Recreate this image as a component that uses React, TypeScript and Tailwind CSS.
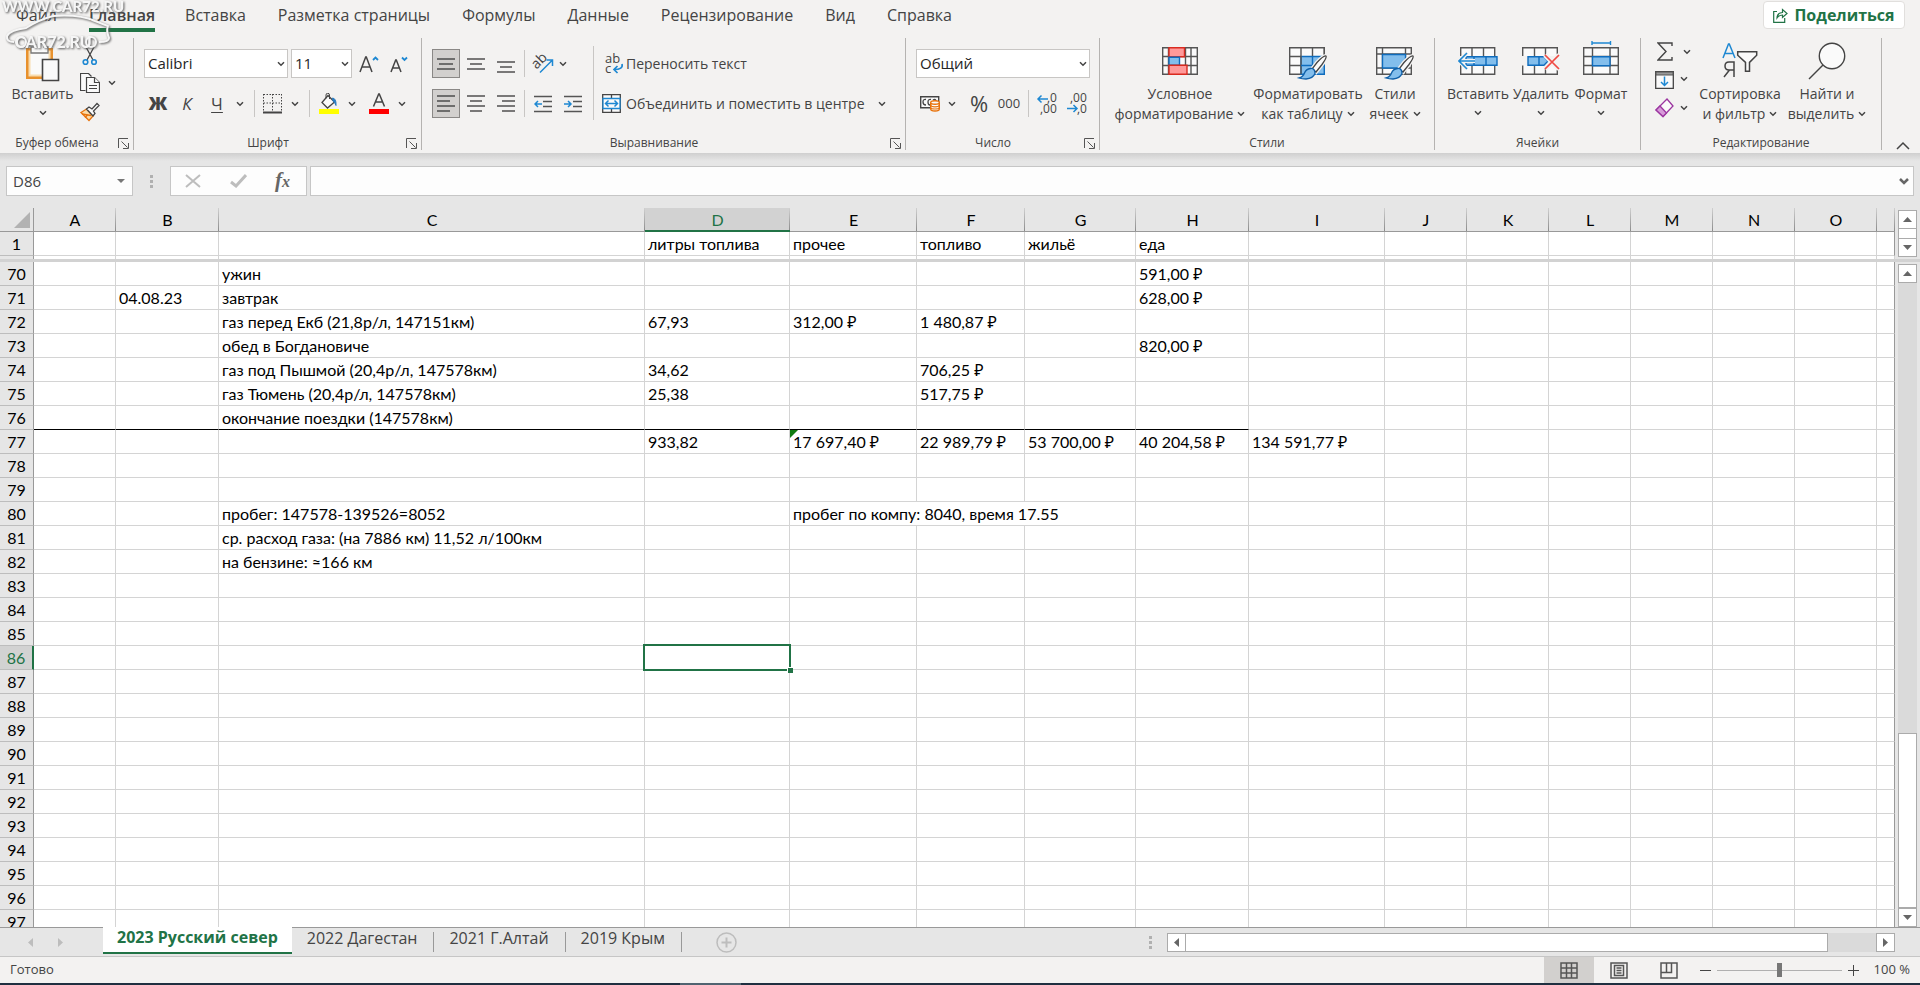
import type { ReactNode } from 'react';

const TABS = ['Файл', 'Главная', 'Вставка', 'Разметка страницы', 'Формулы', 'Данные', 'Рецензирование', 'Вид', 'Справка'];

const SHEETS = ['2023 Русский север', '2022 Дагестан', '2021 Г.Алтай', '2019 Крым'];

const COLUMNS = [
  { id: 'A', width: 'w-[82px]' },
  { id: 'B', width: 'w-[103px]' },
  { id: 'C', width: 'w-[426px]' },
  { id: 'D', width: 'w-[145px]' },
  { id: 'E', width: 'w-[127px]' },
  { id: 'F', width: 'w-[108px]' },
  { id: 'G', width: 'w-[111px]' },
  { id: 'H', width: 'w-[113px]' },
  { id: 'I', width: 'w-[136px]' },
  { id: 'J', width: 'w-[82px]' },
  { id: 'K', width: 'w-[82px]' },
  { id: 'L', width: 'w-[82px]' },
  { id: 'M', width: 'w-[82px]' },
  { id: 'N', width: 'w-[82px]' },
  { id: 'O', width: 'w-[82px]' },
  { id: '', width: '' },
];

const CELLS: Record<string, string> = {
  D1: 'литры топлива',
  E1: 'прочее',
  F1: 'топливо',
  G1: 'жильё',
  H1: 'еда',
  C70: 'ужин',
  H70: '591,00 ₽',
  B71: '04.08.23',
  C71: 'завтрак',
  H71: '628,00 ₽',
  C72: 'газ перед Екб (21,8р/л, 147151км)',
  D72: '67,93',
  E72: '312,00 ₽',
  F72: '1 480,87 ₽',
  C73: 'обед в Богдановиче',
  H73: '820,00 ₽',
  C74: 'газ под Пышмой (20,4р/л, 147578км)',
  D74: '34,62',
  F74: '706,25 ₽',
  C75: 'газ Тюмень (20,4р/л, 147578км)',
  D75: '25,38',
  F75: '517,75 ₽',
  C76: 'окончание поездки (147578км)',
  D77: '933,82',
  E77: '17 697,40 ₽',
  F77: '22 989,79 ₽',
  G77: '53 700,00 ₽',
  H77: '40 204,58 ₽',
  I77: '134 591,77 ₽',
  C80: 'пробег: 147578-139526=8052',
  E80: 'пробег по компу: 8040, время 17.55',
  C81: 'ср. расход газа: (на 7886 км) 11,52 л/100км',
  C82: 'на бензине: ≈166 км',
};

const ROWS = Array.from({ length: 28 }, (_, i) => 70 + i);

function Chevron({ className = '' }: { className?: string }) {
  return (
    <svg viewBox="0 0 8 6" className={`h-[6px] w-[8px] shrink-0 ${className}`} fill="none" stroke="#444" strokeWidth="1.5">
      <path d="M1 1.2 4 4.2 7 1.2" />
    </svg>
  );
}

function Launcher({ label }: { label: string }) {
  return (
    <button aria-label={label} className="ml-1 mr-1">
      <svg viewBox="0 0 11 11" className="h-[11px] w-[11px]" fill="none" stroke="#555">
        <path d="M.5 10V.5H10M3.5 3.5l6 6M10.5 5v5.5H5" />
      </svg>
    </button>
  );
}

function Group({ title, width, launcher, children }: { title: string; width: string; launcher?: boolean; children: ReactNode }) {
  return (
    <section className={`flex shrink-0 flex-col border-r border-[#b5b3b1] ${width}`}>
      <div className="flex h-[98px] pt-1">{children}</div>
      <div className="flex h-3.5 items-center">
        <span className="flex-1 whitespace-nowrap text-center text-[12px] leading-4">{title}</span>
        {launcher && <Launcher label={`Параметры: ${title}`} />}
      </div>
    </section>
  );
}

function BigButton({ width, icon, lines, arrowBelow }: { width: string; icon: ReactNode; lines: string[]; arrowBelow?: boolean }) {
  return (
    <button className={`flex shrink-0 flex-col items-center whitespace-nowrap text-[14px] leading-5 ${width}`}>
      <span className="flex h-[42px] items-start justify-center">{icon}</span>
      <span>{lines[0]}</span>
      {arrowBelow ? (
        <Chevron className="mt-1.5" />
      ) : (
        <span className="flex items-center gap-1">
          {lines[1]}
          <Chevron />
        </span>
      )}
    </button>
  );
}

function IconButton({ label, width = 'w-[28px]', active, children }: { label: string; width?: string; active?: boolean; children: ReactNode }) {
  return (
    <button
      aria-label={label}
      className={`flex h-[29px] shrink-0 items-center justify-center ${width} ${active ? 'border border-[#8a8886] bg-[#d2d0ce]' : ''}`}
    >
      {children}
    </button>
  );
}

function Lines({ rows, y = 0 }: { rows: [number, number][]; y?: number }) {
  return (
    <svg viewBox="0 0 18 18" className="h-[18px] w-[18px]" stroke="#444" strokeWidth="1.4">
      {rows.map(([a, b], i) => (
        <path key={i} d={`M${a} ${y + i * 5}H${b}`} />
      ))}
    </svg>
  );
}

function Indent({ right }: { right?: boolean }) {
  return (
    <svg viewBox="0 0 18 18" className="h-[18px] w-[18px]" fill="none" stroke="#555" strokeWidth="1.5">
      <path d="M0 1.5h18M9 6.5h9M9 11.5h9M0 16.5h18" />
      <path d={right ? 'M0 9h7M4 6l3 3-3 3' : 'M8 9H1M4 6 1 9l3 3'} stroke="#1e88d2" />
    </svg>
  );
}

function PasteIcon() {
  return (
    <svg viewBox="0 0 36 38" className="mt-0.5 h-[38px] w-[36px]" fill="none">
      <path d="M2.500 5.500h24v28h-24z" fill="#fafafa" stroke="#e8912d" strokeWidth="3" />
      <path d="M4.500 7.500h20v24h-20z" stroke="#f8dcae" strokeWidth="2" />
      <path d="M6 3h4a4.500 4.500 0 0 1 9 0h4v6H6z" fill="#fafafa" stroke="#777" strokeWidth="1.300" />
      <path d="M17.500 15.500h16v21h-16z" fill="#fafafa" stroke="#444" strokeWidth="1.600" />
    </svg>
  );
}

function ScissorsIcon() {
  return (
    <svg viewBox="0 0 16 20" className="h-[20px] w-[16px]" fill="none" strokeWidth="1.300">
      <path d="M4 1l7 13M12 1 5 14" stroke="#444" />
      <circle cx="3.500" cy="16" r="2.300" stroke="#1e88d2" strokeWidth="1.600" />
      <circle cx="12" cy="16" r="2.300" stroke="#1e88d2" strokeWidth="1.600" />
    </svg>
  );
}

function CopyIcon() {
  return (
    <svg viewBox="0 0 20 20" className="h-[20px] w-[20px]" fill="#fafafa" stroke="#444" strokeWidth="1.200">
      <path d="M5.500 17.500h-5V.500h8l3 3" />
      <path d="M6.500 4.500h8l5 5v10h-13z" />
      <path d="M14.500 4.500v5h5M9 12.500h8M9 15.500h8" />
    </svg>
  );
}

function BrushIcon() {
  return (
    <svg viewBox="0 0 20 20" className="h-[20px] w-[20px]" strokeWidth="1.300">
      <path d="M1 10.500 6.500 7l6.500 7-4 4.500z" fill="#fbdca9" stroke="#e8730c" />
      <path d="m2 12 9 1.500M5 15.500l3-3" stroke="#e8730c" />
      <path d="m6.500 7 2.500-2 3 2 5-5.500 2 2-5.500 5.500 1.500 2.500-2 2.500z" fill="#fafafa" stroke="#444" />
    </svg>
  );
}

function BordersIcon() {
  return (
    <svg viewBox="0 0 19 20" className="h-[20px] w-[19px]" fill="none" stroke="#444">
      <path d="M.500.500h18M.500 9h18M.500 0v17M9.500 0v17M18.500 0v17" strokeDasharray="1.500 1.500" />
      <path d="M0 18.500h19" strokeWidth="2" />
    </svg>
  );
}

function FillIcon() {
  return (
    <svg viewBox="0 0 20 21" className="h-[21px] w-[20px]" fill="none">
      <path d="m9 2.500 6.500 6.500-7 6L3 9.500z" fill="#fafafa" stroke="#444" strokeWidth="1.300" />
      <path d="M7 5.500V2a1.500 1.500 0 0 1 3.500 0v4" stroke="#444" />
      <path d="M13.500 5q4 .500 3.500 7.500-1-3-3-4.500z" fill="#2b7cc0" stroke="#2b7cc0" />
      <path d="M0 16h20v5H0z" fill="#ff0" />
    </svg>
  );
}

function FontColorIcon() {
  return (
    <svg viewBox="0 0 20 21" className="h-[21px] w-[20px]" fill="none">
      <path d="M4.500 13.500 9.700 1h.600l5.200 12.500M6.500 9h7" stroke="#444" strokeWidth="1.500" />
      <path d="M0 16h20v5H0z" fill="#f00" />
    </svg>
  );
}

function FontSizeIcon({ grow }: { grow?: boolean }) {
  return (
    <svg viewBox="0 0 20 18" className="h-[18px] w-[20px]" fill="none" strokeWidth="1.500">
      <path d={grow ? 'M1 17 6.700 2h.600L13 17M3 12h8' : 'M1 17 5.700 5h.600L11 17M3 13h6'} stroke="#444" />
      <path d={grow ? 'm14 5 2.500-2.500L19 5' : 'm12 2.500 2.500 2.500L17 2.500'} stroke="#1e88d2" strokeWidth="1.800" />
    </svg>
  );
}

function OrientationIcon() {
  return (
    <svg viewBox="0 0 22 21" className="h-[21px] w-[22px] overflow-visible" fill="none">
      <text x="1" y="14" fontSize="14" fill="#444" transform="rotate(-45 6 11)" className="font-['Open_Sans',sans-serif]">ab</text>
      <path d="M8 19.500 20 7.500M14.500 7H20.500V13" stroke="#1e88d2" strokeWidth="1.500" />
    </svg>
  );
}

function WrapIcon() {
  return (
    <svg viewBox="0 0 19 20" className="h-[20px] w-[19px] overflow-visible" fill="none">
      <text x="0" y="9" fontSize="13" fill="#444" className="font-['Open_Sans',sans-serif]">ab</text>
      <text x="0" y="19" fontSize="13" fill="#444" className="font-['Open_Sans',sans-serif]">c</text>
      <path d="M17 10q1.500 5.500-8 5.500M12.500 12 9 15.500l3.500 3.500" stroke="#1e88d2" strokeWidth="1.700" />
    </svg>
  );
}

function MergeIcon() {
  return (
    <svg viewBox="0 0 19 19" className="h-[19px] w-[19px]" fill="none" strokeWidth="1.300">
      <path d="M.700.700h17.600v17.600H.700zM9.500 1v4M9.500 14v4" fill="#fafafa" stroke="#444" />
      <path d="M1 4.500h17v10H1z" fill="#fafafa" stroke="#1e88d2" />
      <path d="M3.500 9.500h12M6.500 6.500l-3 3 3 3M12.500 6.500l3 3-3 3" stroke="#1e88d2" strokeWidth="1.500" />
    </svg>
  );
}

function CurrencyIcon() {
  return (
    <svg viewBox="0 0 20 17" className="h-[17px] w-[20px]" fill="none">
      <path d="M.700 1.700h18v11H.700z" fill="#fafafa" stroke="#444" strokeWidth="1.400" />
      <path d="M6 4.500Q3 4 3 7t3 3M11 4.500Q8 4 8 7t2 3M13 5q3-2 3 2" stroke="#444" strokeWidth="1.300" />
      <path d="M10.700 7.500v6.500q0 2 4.300 2t4.300-2V7.500" fill="#fafafa" stroke="#e8730c" strokeWidth="1.400" />
      <ellipse cx="15" cy="7.500" rx="4.300" ry="1.800" fill="#fafafa" stroke="#e8730c" strokeWidth="1.400" />
      <path d="M10.700 10q0 1.800 4.300 1.800t4.300-1.800M10.700 12.500q0 1.500 4.300 1.500t4.300-1.500" stroke="#e8730c" strokeWidth="1.200" />
    </svg>
  );
}

function DecimalIcon({ less }: { less?: boolean }) {
  return (
    <svg viewBox="0 0 20 21" className="h-[21px] w-[20px] overflow-visible" fill="none">
      <text x={less ? 3 : 10} y="9" fontSize="12" fill="#444" className="font-['Open_Sans',sans-serif]">{less ? ',00' : ',0'}</text>
      <text x={less ? 10 : 3} y="20" fontSize="12" fill="#444" className="font-['Open_Sans',sans-serif]">{less ? ',0' : ',00'}</text>
      <path d={less ? 'M0 15.500h10M6.500 12l3.500 3.500L6.500 19' : 'M11 6H1M4.500 2.500 1 6l3.500 3.500'} stroke="#1e88d2" strokeWidth="1.500" />
    </svg>
  );
}

function ConditionalIcon() {
  return (
    <svg viewBox="0 0 36 36" className="h-[36px] w-[36px]" strokeWidth="1.400">
      <path d="M.700 5.700h34.600v26.600H.700z" fill="#fafafa" stroke="#555" />
      <path d="M6.500 6v26M23.500 6v26M29 6v26M1 14.500h34M1 23.500h34" stroke="#555" />
      <path d="M7 5.700h15.500v9H7z" fill="#ff9999" stroke="#d92b20" />
      <path d="M7 15.300h10.500v8H7z" fill="#83beec" stroke="#0f6cbd" />
      <path d="M7 23.300h18v9H7z" fill="#ff9999" stroke="#d92b20" />
    </svg>
  );
}

function PaintBrush() {
  return (
    <g strokeWidth="1.300">
      <path d="M37 14q-2-1-9 6.500l-5 6.500 4 3 6-7.500q5-7 4-8.500z" fill="#fafafa" stroke="#f3f2f1" strokeWidth="4" />
      <path d="M37 14q-2-1-9 6.500l-5 6.500 4 3 6-7.500q5-7 4-8.500z" fill="#fafafa" stroke="#444" />
      <path d="M10 36q4-1 5.500-5t6-4.500 4.500 5q-2 5-9 5.500-4 0-7-1z" fill="#83beec" stroke="#0f5fa8" />
    </g>
  );
}

function FormatTableIcon() {
  return (
    <svg viewBox="0 0 38 38" className="h-[38px] w-[38px]" strokeWidth="1.400">
      <path d="M.700 5.700h34.600v26.600H.700z" fill="#fafafa" stroke="#555" />
      <path d="M12 14.500h23.300v17.800H12z" fill="#83beec" stroke="#0f6cbd" />
      <path d="M12 6v26M23.500 6v8M1 14.500h11M1 23.500h11M35.300 6v8" stroke="#555" />
      <path d="M23.500 14.500v18M12 23.500h23" stroke="#0f6cbd" />
      <PaintBrush />
    </svg>
  );
}

function CellStylesIcon() {
  return (
    <svg viewBox="0 0 38 38" className="h-[38px] w-[38px]" strokeWidth="1.400">
      <path d="M.700 5.700h34.600v26.600H.700z" fill="#fafafa" stroke="#555" />
      <path d="M6.500 6v26M29.500 6v26M1 12h34M1 26h34" stroke="#555" />
      <path d="M6.500 12.500h23V26h-23z" fill="#83beec" stroke="#0f6cbd" />
      <PaintBrush />
    </svg>
  );
}

function InsertCellsIcon() {
  return (
    <svg viewBox="0 0 40 36" className="h-[36px] w-[40px]" strokeWidth="1.400">
      <path d="M2.700 5.700h34v26.600h-34z" fill="#fafafa" stroke="#555" />
      <path d="M14 6v26M25.500 6v26" stroke="#555" />
      <path d="M0 14h4v9H0z" fill="#f3f2f1" />
      <path d="M8 14.700h31v8.600H8zM16 14.700v8.600M28 14.700v8.600" fill="#83beec" stroke="#0f6cbd" />
      <path d="M17 19H1M9 11 1 19l8 8" fill="none" stroke="#f3f2f1" strokeWidth="4" />
      <path d="M17 19H1M9 11 1 19l8 8" fill="none" stroke="#1e88d2" strokeWidth="1.600" />
    </svg>
  );
}

function DeleteCellsIcon() {
  return (
    <svg viewBox="0 0 38 36" className="h-[36px] w-[38px]" strokeWidth="1.400">
      <path d="M.700 5.700h34.600v26.600H.700z" fill="#fafafa" stroke="#555" />
      <path d="M12.500 6v26M23.500 6v26" stroke="#555" />
      <path d="M0 14h38v9.500H0z" fill="#f3f2f1" />
      <path d="M6 14.700h16l4 4.300-4 4.300H6zM17 14.700v8.600" fill="#83beec" stroke="#0f6cbd" />
      <path d="m23 13 14 14M37 13 23 27" stroke="#f3f2f1" strokeWidth="5" />
      <path d="m23 13 14 14M37 13 23 27" stroke="#f04a43" strokeWidth="1.700" />
    </svg>
  );
}

function FormatCellsIcon() {
  return (
    <svg viewBox="0 0 36 36" className="h-[36px] w-[36px] overflow-visible" strokeWidth="1.400">
      <path d="M.700 5.700h34.600v26.600H.700z" fill="#fafafa" stroke="#555" />
      <path d="M9.500 6v26M27 6v26M1 14.500h34M1 23.500h34" stroke="#555" />
      <path d="M9.500 14.700h17.500v9H9.500z" fill="#83beec" stroke="#0f6cbd" />
      <path d="M9 1h18.500M9-1v4M27.500-1v4" stroke="#1e88d2" />
    </svg>
  );
}

function SumIcon() {
  return (
    <svg viewBox="0 0 16 19" className="h-[19px] w-[16px]" fill="none" stroke="#444" strokeWidth="1.400">
      <path d="M15 4V1H1l8 8.500L1 18h14v-3" />
    </svg>
  );
}

function FillDownIcon() {
  return (
    <svg viewBox="0 0 19 19" className="h-[19px] w-[19px]" strokeWidth="1.300">
      <path d="M.700 1.700h17.600v16.600H.700z" fill="#fafafa" stroke="#444" />
      <path d="M1 2h17v3H1z" fill="#999" stroke="#555" strokeWidth="1" />
      <path d="M9.500 6.500v9M6 12l3.500 3.500L13 12" fill="none" stroke="#1e88d2" strokeWidth="1.500" />
    </svg>
  );
}

function EraserIcon() {
  return (
    <svg viewBox="0 0 19 20" className="h-[20px] w-[19px]" stroke="#9b35a0" strokeWidth="1.300">
      <path d="m12 1 6 7-10 10.500L1 12z" fill="#fafafa" />
      <path d="m5 8 6.500 7L8 18.500 1 12z" fill="#d79ad9" />
    </svg>
  );
}

function SortFilterIcon() {
  return (
    <svg viewBox="0 0 36 36" className="h-[36px] w-[36px]" fill="none" strokeWidth="1.500">
      <path d="M1 16 6.500 2h.800L13 16M3 11.500h8" stroke="#1e88d2" />
      <path d="M12 35V20H7q-4 0-4 4t4 4h5M7.500 28 2 35" stroke="#444" />
      <path d="M15.700 9.700h19v3.500l-7.200 7.200v8.800h-4v-8.800l-7.800-7.200z" fill="#fafafa" stroke="#444" />
    </svg>
  );
}

function FindIcon() {
  return (
    <svg viewBox="0 0 38 38" className="h-[38px] w-[38px]" stroke="#444" strokeWidth="1.400">
      <circle cx="24" cy="14" r="12.700" fill="#fafafa" />
      <path d="M15 23 1 37" />
    </svg>
  );
}

function SelectBox({ label, value, width }: { label: string; value: string; width: string }) {
  return (
    <div className={`relative shrink-0 ${width}`}>
      <select
        aria-label={label}
        defaultValue={value}
        className="h-[29px] w-full appearance-none rounded-none border border-[#c8c6c4] bg-white px-[3px] text-[15px] text-[#262626] outline-none"
      >
        <option>{value}</option>
      </select>
      <Chevron className="pointer-events-none absolute right-[3px] top-[12px]" />
    </div>
  );
}

function Divider({ height = 'h-[27px]' }: { height?: string }) {
  return <span className={`w-px shrink-0 bg-[#c8c6c4] ${height}`} />;
}

function Watermark() {
  return (
    <svg viewBox="0 0 130 54" aria-label="car72.ru" className="pointer-events-none absolute left-0 top-0 z-10 h-[54px] w-[130px] overflow-visible drop-shadow-[1px_1px_1px_#555]">
      <g className="font-['Lato',sans-serif] font-black" fill="#f6f6f6">
        <text x="2" y="12" fontSize="15">WWW.CAR72.RU</text>
        <text x="15" y="48" fontSize="16">CAR72.RU</text>
      </g>
      <path
        d="M14 42q-8 0-7-6 3-6 19-8 12-8 27-12 26-2 42 5l13 5q-2 5 1 12 0 4-10 4"
        fill="none"
        stroke="#f6f6f6"
        strokeWidth="2"
      />
      <circle cx="21" cy="42" r="5" fill="none" stroke="#f6f6f6" strokeWidth="2" />
      <circle cx="91" cy="42" r="5" fill="none" stroke="#f6f6f6" strokeWidth="2" />
    </svg>
  );
}

function Ribbon() {
  return (
    <div className="flex h-[115px] pb-[3px] text-[#444]">
      <Group title="Буфер обмена" width="w-[134px]" launcher>
        <BigButton width="ml-2.5 w-[65px]" icon={<PasteIcon />} lines={['Вставить']} arrowBelow />
        <div className="ml-[5px] flex flex-col">
          <button aria-label="Вырезать" className="flex h-[27px] items-center pl-0.5"><ScissorsIcon /></button>
          <button aria-label="Копировать" className="flex h-[28px] items-center gap-2"><CopyIcon /><Chevron /></button>
          <button aria-label="Формат по образцу" className="flex h-[29px] items-center"><BrushIcon /></button>
        </div>
      </Group>

      <Group title="Шрифт" width="w-[288px]" launcher>
        <div className="flex flex-col gap-[11px] pl-2.5 pt-[7px]">
          <div className="flex items-center gap-[3px]">
            <SelectBox label="Шрифт" value="Calibri" width="w-[144px]" />
            <SelectBox label="Размер шрифта" value="11" width="w-[61px]" />
            <div className="flex">
              <IconButton label="Увеличить размер"><FontSizeIcon grow /></IconButton>
              <IconButton label="Уменьшить размер" width="w-[34px]"><FontSizeIcon /></IconButton>
            </div>
          </div>
          <div className="flex items-center">
            <IconButton label="Полужирный"><span className="text-[18px] font-extrabold">Ж</span></IconButton>
            <IconButton label="Курсив" width="w-[30px]"><span className="text-[17px] italic">К</span></IconButton>
            <IconButton label="Подчёркнутый" width="w-[30px]"><span className="text-[17px] underline underline-offset-2">Ч</span></IconButton>
            <Chevron className="ml-1" />
            <Divider height="ml-2.5 h-[27px]" />
            <IconButton label="Границы" width="ml-0.5 w-[30px]"><BordersIcon /></IconButton>
            <Chevron className="ml-1" />
            <Divider height="ml-2.5 h-[27px]" />
            <IconButton label="Цвет заливки" width="ml-1 w-[30px]"><FillIcon /></IconButton>
            <Chevron className="ml-1" />
            <IconButton label="Цвет шрифта" width="ml-2 w-[30px]"><FontColorIcon /></IconButton>
            <Chevron className="ml-1" />
          </div>
        </div>
      </Group>

      <Group title="Выравнивание" width="w-[484px]" launcher>
        <div className="flex flex-col gap-[11px] pl-2.5 pt-[7px]">
          <div className="flex items-center gap-0.5">
            <IconButton label="По верхнему краю" active><Lines rows={[[0, 18], [2, 16], [0, 18]]} y={4} /></IconButton>
            <IconButton label="По середине"><Lines rows={[[0, 18], [3, 15], [0, 18]]} y={4} /></IconButton>
            <IconButton label="По нижнему краю"><Lines rows={[[0, 18], [3, 15], [0, 18]]} y={7} /></IconButton>
            <Divider height="mx-0.5 h-[27px]" />
            <IconButton label="Ориентация"><OrientationIcon /></IconButton>
            <Chevron />
          </div>
          <div className="flex items-center gap-0.5">
            <IconButton label="По левому краю" active><Lines rows={[[0, 18], [0, 13], [0, 18], [0, 13]]} y={1} /></IconButton>
            <IconButton label="По центру"><Lines rows={[[0, 18], [3, 15], [0, 18], [3, 15]]} y={1} /></IconButton>
            <IconButton label="По правому краю"><Lines rows={[[0, 18], [5, 18], [0, 18], [5, 18]]} y={1} /></IconButton>
            <Divider height="mx-0.5 h-[27px]" />
            <IconButton label="Уменьшить отступ"><Indent /></IconButton>
            <IconButton label="Увеличить отступ"><Indent right /></IconButton>
          </div>
        </div>
        <Divider height="ml-1.5 mt-1 h-[74px]" />
        <div className="flex flex-col gap-[11px] pl-2 pt-[7px] text-[14px]">
          <button className="flex h-[29px] items-center gap-0.5 whitespace-nowrap pl-[3px]"><WrapIcon />Переносить текст</button>
          <button className="flex h-[29px] items-center gap-[5px] whitespace-nowrap"><MergeIcon />Объединить и поместить в центре<Chevron className="ml-2" /></button>
        </div>
      </Group>

      <Group title="Число" width="w-[194px]" launcher>
        <div className="flex flex-col gap-[11px] pl-2.5 pt-[7px]">
          <SelectBox label="Числовой формат" value="Общий" width="w-[174px]" />
          <div className="flex items-center">
            <IconButton label="Финансовый формат"><CurrencyIcon /></IconButton>
            <Chevron className="ml-1" />
            <IconButton label="Процентный формат" width="ml-2 w-[30px]"><span className="text-[22px]">%</span></IconButton>
            <IconButton label="Формат с разделителями" width="w-[30px]"><span className="text-[13px]">000</span></IconButton>
            <Divider height="mx-1 h-[27px]" />
            <IconButton label="Увеличить разрядность" width="w-[28px]"><DecimalIcon /></IconButton>
            <IconButton label="Уменьшить разрядность" width="w-[32px]"><DecimalIcon less /></IconButton>
          </div>
        </div>
      </Group>

      <Group title="Стили" width="w-[335px]">
        <BigButton width="ml-2.5 w-[140px]" icon={<ConditionalIcon />} lines={['Условное', 'форматирование']} />
        <BigButton width="w-[116px]" icon={<FormatTableIcon />} lines={['Форматировать', 'как таблицу']} />
        <BigButton width="w-[58px]" icon={<CellStylesIcon />} lines={['Стили', 'ячеек']} />
      </Group>

      <Group title="Ячейки" width="w-[206px]">
        <BigButton width="ml-2.5 w-[66px]" icon={<InsertCellsIcon />} lines={['Вставить']} arrowBelow />
        <BigButton width="w-[60px]" icon={<DeleteCellsIcon />} lines={['Удалить']} arrowBelow />
        <BigButton width="w-[60px]" icon={<FormatCellsIcon />} lines={['Формат']} arrowBelow />
      </Group>

      <Group title="Редактирование" width="w-[241px]">
        <div className="flex flex-col pl-3.5">
          <button aria-label="Сумма" className="flex h-[19px] items-center gap-2.5 pl-0.5"><SumIcon /><Chevron /></button>
          <button aria-label="Заполнить" className="mt-1 flex h-[28px] items-center gap-1.5"><FillDownIcon /><Chevron /></button>
          <button aria-label="Очистить" className="flex h-[29px] items-center gap-1.5"><EraserIcon /><Chevron /></button>
        </div>
        <BigButton width="ml-1 w-[90px]" icon={<SortFilterIcon />} lines={['Сортировка', 'и фильтр']} />
        <BigButton width="w-[84px]" icon={<FindIcon />} lines={['Найти и', 'выделить']} />
      </Group>

      <div className="flex flex-1 items-end justify-end pr-2.5">
        <button aria-label="Свернуть ленту">
          <svg viewBox="0 0 14 9" className="h-[9px] w-[14px]" fill="none" stroke="#444" strokeWidth="1.500">
            <path d="m1 8 6-6 6 6" />
          </svg>
        </button>
      </div>
    </div>
  );
}

function Dots() {
  return (
    <span className="flex flex-col gap-0.5">
      <span className="h-[3px] w-[3px] bg-[#b0b0b0]" />
      <span className="h-[3px] w-[3px] bg-[#b0b0b0]" />
      <span className="h-[3px] w-[3px] bg-[#b0b0b0]" />
    </span>
  );
}

function FormulaBar() {
  return (
    <div className="flex h-[55px] shrink-0 items-start bg-[#e6e6e6] bg-[linear-gradient(#cfcfcf,#e6e6e6)] bg-[length:100%_8px] bg-no-repeat pl-1.5 pr-1.5 pt-[13px]">
      <div className="relative w-[127px]">
        <input aria-label="Имя" defaultValue="D86" className="h-[30px] w-full border border-[#c6c6c6] bg-[#fdfdfd] px-1.5 text-[15px] text-[#444] outline-none" />
        <svg viewBox="0 0 8 4" className="pointer-events-none absolute right-[8px] top-[13px] h-[4px] w-[8px]"><path d="M0 0h8L4 4z" fill="#777" /></svg>
      </div>
      <div className="flex h-[30px] w-[37px] items-center justify-center"><Dots /></div>
      <div className="flex h-[30px] w-[137px] items-center justify-between border border-[#c6c6c6] bg-[#fdfdfd] pl-3.5 pr-4">
        <button aria-label="Отмена">
          <svg viewBox="0 0 16 14" className="h-[14px] w-[16px]" stroke="#bdbdbd" strokeWidth="2"><path d="m1 1 14 12M15 1 1 13" /></svg>
        </button>
        <button aria-label="Ввод">
          <svg viewBox="0 0 17 14" className="h-[14px] w-[17px]" fill="none" stroke="#bdbdbd" strokeWidth="3"><path d="m1 8 5 4L16 1" /></svg>
        </button>
        <button aria-label="Вставить функцию" className="font-['Liberation_Serif',serif] text-[21px] font-bold italic leading-6 text-[#666]">
          f<span className="text-[16px]">x</span>
        </button>
      </div>
      <div className="relative ml-[3px] flex-1">
        <input aria-label="Строка формул" className="h-[30px] w-full border border-[#c6c6c6] bg-[#fdfdfd] px-2 outline-none" />
        <svg viewBox="0 0 10 7" className="pointer-events-none absolute right-[5px] top-[12px] h-[7px] w-[10px]" fill="none" stroke="#666" strokeWidth="2.500"><path d="m1 1 4 4 4-4" /></svg>
      </div>
    </div>
  );
}

function SheetCell({ row, col, span }: { row: number; col: string; span?: number }) {
  const id = `${col}${row}`;
  const total = row === 76 && col !== '' && col <= 'H';
  return (
    <td
      colSpan={span}
      className={`relative h-6 whitespace-nowrap border-b border-r p-0 pl-[3px] ${total ? 'border-b-black' : 'border-b-[#d4d4d4]'} ${col === '' ? 'border-r-[#999]' : 'border-r-[#d4d4d4]'}`}
    >
      {CELLS[id]}
      {id === 'E77' && (
        <svg viewBox="0 0 8 8" className="absolute left-0 top-0 h-[8px] w-[8px]"><path d="M0 0h8L0 8z" fill="#107c10" /></svg>
      )}
      {id === 'D86' && (
        <span className="absolute -bottom-0.5 -left-0.5 -right-0.5 -top-0.5 z-10 border-2 border-[#217346]">
          <span className="absolute -bottom-[4px] -right-[4px] h-[6px] w-[6px] border-l border-t border-white bg-[#217346]" />
        </span>
      )}
    </td>
  );
}

function SheetRow({ row }: { row: number }) {
  const active = row === 86;
  return (
    <tr>
      <th
        scope="row"
        className={`h-6 border-b border-r border-b-[#bdbdbd] p-0 font-normal ${active ? 'border-r-2 border-r-[#217346] bg-[#d2d2d2] text-[#217346]' : 'border-r-[#999] bg-[#e6e6e6]'}`}
      >
        {row}
      </th>
      {COLUMNS.filter((c) => !(row === 80 && (c.id === 'F' || c.id === 'G'))).map((c) => (
        <SheetCell key={c.id} row={row} col={c.id} span={row === 80 && c.id === 'E' ? 3 : undefined} />
      ))}
    </tr>
  );
}

function Grid() {
  return (
    <table className="w-full table-fixed border-separate border-spacing-0 bg-white font-['Lato','Noto_Sans',sans-serif] text-[16px] leading-5 text-black">
      <colgroup>
        <col className="w-[34px]" />
        {COLUMNS.map((c) => <col key={c.id} className={c.width} />)}
      </colgroup>
      <thead>
        <tr>
          <th aria-label="Выделить все" className="h-6 border-b border-r border-[#999] bg-[#e6e6e6] p-0">
            <svg viewBox="0 0 16 16" className="ml-auto mr-[3px] h-[16px] w-[16px]"><path d="M16 0v16H0z" fill="#b2b2b2" /></svg>
          </th>
          {COLUMNS.map((c) => (
            <th
              key={c.id}
              scope="col"
              className={`h-6 p-0 pt-px font-normal bg-[linear-gradient(#d0d0d0,#8c8c8c)] bg-[length:1px_100%] bg-right bg-no-repeat ${c.id === 'D' ? 'border-b-2 border-[#217346] bg-[#d2d2d2] text-[#217346]' : 'border-b border-[#999] bg-[#e6e6e6]'}`}
            >
              {c.id}
            </th>
          ))}
        </tr>
      </thead>
      <tbody>
        <SheetRow row={1} />
        <tr aria-hidden="true">
          <td className="h-[3px] border-r border-[#999] bg-[#e6e6e6] p-0" />
          {COLUMNS.map((c) => <td key={c.id} className="h-[3px] border-r border-[#d4d4d4] p-0" />)}
        </tr>
        <tr aria-hidden="true">
          <td colSpan={COLUMNS.length + 1} className="h-[3px] bg-[#d2d2d2] p-0" />
        </tr>
        {ROWS.map((row) => <SheetRow key={row} row={row} />)}
      </tbody>
    </table>
  );
}

const ARROWS = {
  up: 'M0 7h9L4.500 2z',
  down: 'M0 2h9L4.500 7z',
  left: 'M7 0v9L2 4.500z',
  right: 'M2 0v9l5-4.500z',
};

function ScrollButton({ dir, label }: { dir: keyof typeof ARROWS; label: string }) {
  return (
    <button aria-label={label} className="flex h-[19px] w-[19px] shrink-0 items-center justify-center border border-[#ababab] bg-white">
      <svg viewBox="0 0 9 9" className="h-[9px] w-[9px]"><path d={ARROWS[dir]} fill="#666" /></svg>
    </button>
  );
}

function VerticalScroll() {
  return (
    <div className="flex w-[25px] shrink-0 flex-col">
      <div className="flex h-[51px] flex-col pb-0.5 pl-[3px] pt-0.5">
        <ScrollButton dir="up" label="Вверх (закреплённая область)" />
        <div className="w-[19px] flex-1 border-x border-[#ababab] bg-white" />
        <ScrollButton dir="down" label="Вниз (закреплённая область)" />
      </div>
      <div className="h-[3px] bg-[#d2d2d2]" />
      <div className="flex flex-1 flex-col pl-[3px] pt-0.5">
        <ScrollButton dir="up" label="Вверх" />
        <div className="flex w-[19px] flex-1 flex-col justify-end bg-[#dadada]">
          <div className="h-[28%] border border-[#ababab] bg-white" />
        </div>
        <ScrollButton dir="down" label="Вниз" />
      </div>
    </div>
  );
}

function SheetTabs() {
  return (
    <div className="flex h-[29px] shrink-0 items-start border-t border-[#999] bg-[#e6e6e6] text-[16px] text-[#444]">
      <div className="flex h-7 w-[103px] shrink-0 items-center gap-[25px] pl-7">
        <button aria-label="Предыдущий лист"><svg viewBox="0 0 5 9" className="h-[9px] w-[5px]"><path d="M5 0v9L0 4.500z" fill="#bdbdbd" /></svg></button>
        <button aria-label="Следующий лист"><svg viewBox="0 0 5 9" className="h-[9px] w-[5px]"><path d="M0 0v9l5-4.500z" fill="#bdbdbd" /></svg></button>
      </div>
      {SHEETS.map((name, i) =>
        i === 0 ? (
          <button key={name} className="-mt-px h-[27px] whitespace-nowrap border-b-2 border-[#217346] bg-white px-3.5 pb-1.5 font-bold leading-4 text-[#217346]">{name}</button>
        ) : (
          <button key={name} className="mt-1 h-[20px] whitespace-nowrap border-r border-[#999] pb-2 pl-[15px] pr-4 leading-3">{name}</button>
        ),
      )}
      <button aria-label="Новый лист" className="ml-[34px] mt-1">
        <svg viewBox="0 0 21 21" className="h-[21px] w-[21px]" fill="none" stroke="#bdbdbd" strokeWidth="1.500">
          <circle cx="10.500" cy="10.500" r="9.500" />
          <path d="M10.500 5.500v10M5.500 10.500h10" strokeWidth="2" />
        </svg>
      </button>
      <div className="flex-1" />
      <div className="flex h-7 w-[771px] items-center">
        <div className="mr-[15px]"><Dots /></div>
        <ScrollButton dir="left" label="Влево" />
        <div className="-ml-px flex h-[19px] flex-1 bg-[#dadada]">
          <div className="w-[93%] border border-[#ababab] bg-white" />
        </div>
        <ScrollButton dir="right" label="Вправо" />
        <div className="w-[25px]" />
      </div>
    </div>
  );
}

function StatusBar() {
  return (
    <footer className="flex h-[27px] shrink-0 items-center border-t border-[#c6c6c6] bg-[#f3f2f1] pl-2.5 pr-[10px] text-[13px] text-[#444]">
      <span className="flex-1">Готово</span>
      <button aria-label="Обычный" className="flex h-[26px] w-[50px] items-center justify-center bg-[#d2d0ce]">
        <svg viewBox="0 0 18 17" className="h-[17px] w-[18px]" fill="none" stroke="#555" strokeWidth="1.500"><path d="M1 1h16v15H1zM6.500 1v15M11.500 1v15M1 6h16M1 11h16" /></svg>
      </button>
      <button aria-label="Разметка страницы" className="flex h-[26px] w-[50px] items-center justify-center">
        <svg viewBox="0 0 18 17" className="h-[17px] w-[18px]" fill="none" stroke="#555" strokeWidth="1.500"><path d="M1 1h16v15H1zM4.500 3.500h9v10h-9zM6.500 6h5M6.500 8.500h5M6.500 11h5" /></svg>
      </button>
      <button aria-label="Страничный режим" className="flex h-[26px] w-[50px] items-center justify-center">
        <svg viewBox="0 0 18 17" className="h-[17px] w-[18px]" fill="none" stroke="#555" strokeWidth="1.500"><path d="M1 1h16v15H1zM1 10.500h10.500V1M6.500 1v9" /></svg>
      </button>
      <button aria-label="Уменьшить масштаб" className="ml-1.5 h-px w-[11px] bg-[#444]" />
      <input
        type="range"
        aria-label="Масштаб"
        className="mx-1.5 h-[14px] w-[125px] appearance-none bg-[linear-gradient(#b0b0b0,#b0b0b0)] bg-[length:100%_1px] bg-center bg-no-repeat [&::-webkit-slider-thumb]:h-[14px] [&::-webkit-slider-thumb]:w-[5px] [&::-webkit-slider-thumb]:appearance-none [&::-webkit-slider-thumb]:bg-[#777]"
      />
      <button aria-label="Увеличить масштаб">
        <svg viewBox="0 0 11 11" className="h-[11px] w-[11px]" stroke="#444"><path d="M5.500 0v11M0 5.500h11" /></svg>
      </button>
      <span className="w-[51px] whitespace-nowrap text-right">100 %</span>
    </footer>
  );
}

export default function App() {
  return (
    <div className="relative flex h-screen flex-col overflow-hidden bg-[#e6e6e6] font-['Open_Sans','Noto_Sans',sans-serif]">
      <Watermark />

      <header className="shrink-0 bg-[#f3f2f1]">
        <nav className="flex h-[38px] items-start text-[16px] text-[#444]">
          {TABS.map((tab) => (
            <button key={tab} className={`h-8 whitespace-nowrap ${tab === 'Вставка' ? 'pl-3.5 pr-4' : 'px-4'}`}>
              <span className={`block h-8 leading-[30px] ${tab === 'Главная' ? 'border-b-4 border-[#217346] font-semibold' : ''}`}>{tab}</span>
            </button>
          ))}
          <button className="ml-auto mr-[15px] mt-px flex h-[28px] w-[142px] items-center justify-center gap-1.5 rounded-sm border border-[#e1dfdd] bg-white font-bold text-[#217346]">
            <svg viewBox="0 0 15 15" className="h-[15px] w-[15px]" fill="none" stroke="#217346" strokeWidth="1.200">
              <path d="M4 3.500H.700v10.800h11V10M4 10q0-5 5.500-5.500V1.500l4.500 4-4.500 4V7Q6 7 4 10z" />
            </svg>
            Поделиться
          </button>
        </nav>
        <Ribbon />
      </header>

      <FormulaBar />

      <main className="flex min-h-0 flex-1">
        <div className="min-w-0 flex-1 overflow-hidden">
          <Grid />
        </div>
        <VerticalScroll />
      </main>

      <SheetTabs />
      <StatusBar />
      <div className="flex h-0.5 shrink-0 justify-start bg-[#1f2f40] pl-[680px]">
        <span className="w-[61px] bg-[#4f6370]" />
      </div>
    </div>
  );
}
